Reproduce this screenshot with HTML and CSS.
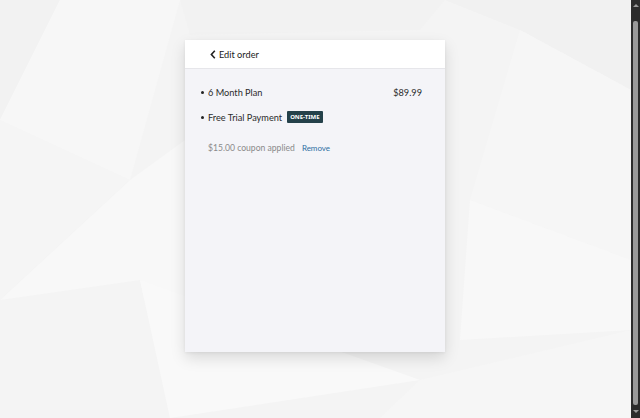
FILE: index.html
```html
<!DOCTYPE html>
<html>
<head>
<meta charset="utf-8">
<link rel="stylesheet" href="styles.css">
</head>
<body>
<div class="page">
  <svg class="bg" width="631" height="418" viewBox="0 0 631 418" preserveAspectRatio="none">
    <rect width="631" height="418" fill="#f4f4f4"/>
    <polygon points="0,0 60,0 0,120" fill="#f2f2f2"/>
    <polygon points="60,0 180,0 130,180 0,120" fill="#f7f7f7"/>
    <polygon points="0,120 130,180 0,300" fill="#f5f5f5"/>
    <polygon points="130,180 185,140 185,300 0,300" fill="#f8f8f8"/>
    <polygon points="0,300 140,280 170,418 0,418" fill="#f4f4f4"/>
    <polygon points="140,280 420,380 170,418" fill="#f9f9f9"/>
    <polygon points="420,380 631,330 631,418 380,418" fill="#f6f6f6"/>
    <polygon points="445,0 631,0 631,90 520,30" fill="#f1f1f1"/>
    <polygon points="520,30 631,90 631,260 470,200" fill="#f6f6f6"/>
    <polygon points="470,200 631,260 631,330 460,340" fill="#f8f8f8"/>
    <polygon points="180,0 445,0 420,30 190,35" fill="#f2f2f2"/>
  </svg>
  <div class="card">
    <div class="card-head">
      <svg class="chev" width="6" height="9" viewBox="0 0 6 9"><path d="M4.8 0.8 L1.4 4.5 L4.8 8.2" fill="none" stroke="#222" stroke-width="1.6"/></svg>
      <span>Edit order</span>
    </div>
    <div class="card-body">
      <div class="item">
        <span class="dot"></span>
        <span class="name">6 Month Plan</span>
        <span class="price">$89.99</span>
      </div>
      <div class="item">
        <span class="dot"></span>
        <span class="name">Free Trial Payment</span>
        <span class="badge">ONE-TIME</span>
      </div>
      <div class="coupon">
        <span class="coupon-text">$15.00 coupon applied</span>
        <span class="remove">Remove</span>
      </div>
    </div>
  </div>
</div>
<div class="scrollbar">
  <div class="arrow up"></div>
  <div class="thumb"></div>
  <div class="arrow down"></div>
</div>
</body>
</html>
```
FILE: styles.css
```css
html, body {
  margin: 0;
  padding: 0;
  height: 418px;
  overflow: hidden;
}
body {
  display: flex;
  font-family: Lato, "Noto Sans", sans-serif;
  color: #2b2b2b;
}
.page {
  position: relative;
  flex: 1;
  height: 418px;
  display: flex;
  justify-content: flex-start;
  align-items: flex-start;
  padding: 40px 0 0 185px;
  box-sizing: border-box;
}
.bg {
  position: absolute;
  left: 0;
  top: 0;
}
.card {
  position: relative;
  width: 260px;
  height: 312px;
  background: #f4f4f8;
  box-shadow: 0 6px 14px rgba(0, 0, 0, 0.13), 0 1px 3px rgba(0, 0, 0, 0.06);
  display: flex;
  flex-direction: column;
}
.card-head {
  height: 28px;
  background: #fff;
  border-bottom: 1px solid #e6e6ea;
  display: flex;
  align-items: center;
  padding-left: 25px;
  font-size: 9.2px;
  gap: 3px;
  color: #222;
}
.chev {
  display: block;
}
.card-body {
  padding: 14px 23px 0 16px;
  display: flex;
  flex-direction: column;
}
.item {
  display: flex;
  align-items: center;
  height: 18px;
  margin-bottom: 7px;
  font-size: 9.2px;
}
.dot {
  width: 3px;
  height: 3px;
  border-radius: 50%;
  background: #222;
  margin-right: 4px;
}
.name {
  color: #2b2b2b;
}
.price {
  margin-left: auto;
  color: #2b2b2b;
}
.badge {
  margin-left: 5px;
  background: #24414a;
  color: #fff;
  font-family: "Noto Sans", sans-serif;
  font-size: 6px;
  font-weight: 700;
  padding: 2px 3px;
  line-height: 8px;
  border-radius: 1px;
}
.coupon {
  display: flex;
  align-items: center;
  height: 18px;
  margin-top: 6px;
  padding-left: 7px;
  font-size: 8.6px;
}
.coupon-text {
  color: #8a8a8a;
}
.remove {
  margin-left: 7px;
  color: #2e6fa3;
  font-size: 8px;
}
.scrollbar {
  width: 9px;
  height: 418px;
  background: #2c2c2c;
  display: flex;
  flex-direction: column;
  align-items: center;
}
.arrow {
  width: 0;
  height: 0;
  border-left: 3px solid transparent;
  border-right: 3px solid transparent;
}
.arrow.up {
  margin-top: 4px;
  border-bottom: 3px solid #9a9a9a;
}
.arrow.down {
  margin-bottom: 5px;
  border-top: 3px solid #9a9a9a;
}
.thumb {
  width: 5px;
  flex: 1;
  margin: 14px 0 5px;
  background: #9a9a9a;
  border-radius: 2px;
}
```
